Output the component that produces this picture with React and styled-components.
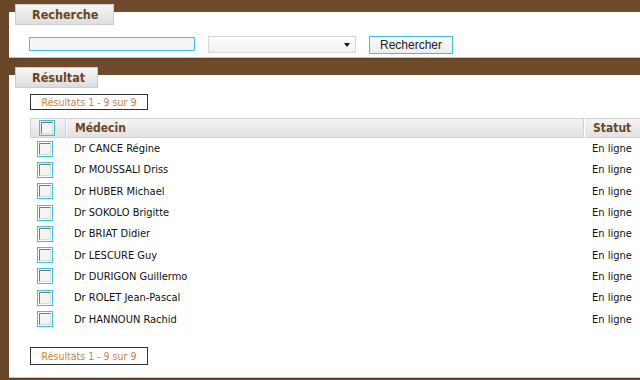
import React from 'react';
import styled, {createGlobalStyle} from 'styled-components';

const Global = createGlobalStyle`
  html, body {
    margin: 0;
    padding: 0;
    overflow: hidden;
  }
  body {
    width: 640px;
    height: 380px;
    background-color: #6f4a2b;
    background-image: linear-gradient(90deg, rgba(0,0,0,0.06), rgba(0,0,0,0) 40px);
    font-family: "DejaVu Sans Condensed", "Noto Sans", sans-serif;
  }
`

const Page = styled.div`
  display: flex;
  flex-direction: column;
  gap: 9px;
  padding-top: 4px;
  padding-left: 9px;
`

const Section = styled.section`
  display: flex;
  flex-direction: column;
`

const Tab = styled.div`
  position: relative;
  z-index: 1;
  align-self: flex-start;
  margin-left: 6px;
  margin-bottom: -13px;
  width: ${p => p.w}px;
  height: 21px;
  box-sizing: border-box;
  padding-left: 16px;
  border: 1px solid #cbcbcb;
  background: linear-gradient(#f7f7f7, #dddddd);
  color: #6b4524;
  font-weight: bold;
  font-size: 12.5px;
  line-height: 20px;
`

const Panel = styled.div`
  background: #fff;
  height: ${p => p.h}px;
  box-sizing: border-box;
  padding: ${p => p.pad};
  border-bottom: 1px solid #cfc7bd;
  box-shadow: 0 1px 1px rgba(0,0,0,0.15);
`

const SearchRow = styled.div`
  display: flex;
  align-items: center;
  gap: 13px;
`

const TextInput = styled.div`
  width: 166px;
  height: 14px;
  box-sizing: border-box;
  border: 1px solid #3ec2d9;
  background: #f5f5f5;
`

const Select = styled.div`
  position: relative;
  width: 148px;
  height: 17px;
  box-sizing: border-box;
  border: 1px solid #d8d8d8;
  background: linear-gradient(#fdfdfd, #f0f0f0);
  margin-top: 2px;
  &::after {
    content: '';
    position: absolute;
    right: 5px;
    top: 6px;
    border-left: 3px solid transparent;
    border-right: 3px solid transparent;
    border-top: 4px solid #111;
  }
`

const Button = styled.div`
  width: 84px;
  height: 18px;
  box-sizing: border-box;
  border: 1px solid #3ec2d9;
  background: linear-gradient(#fbfbfb, #ececec);
  font-family: "Liberation Sans", Arial, sans-serif;
  font-size: 12px;
  line-height: 16px;
  text-align: center;
  color: #222;
  margin-top: 3px;
`

const Count = styled.div`
  width: 118px;
  height: ${p => p.h || 16}px;
  box-sizing: border-box;
  border: 1px solid #333;
  color: #c9824c;
  font-size: 10.5px;
  line-height: ${p => (p.h || 16) - 2}px;
  text-align: center;
`

const Table = styled.div`
  display: grid;
  grid-template-columns: 36px 518px 80px;
  margin-top: 8px;
  margin-bottom: 17px;
`

const Head = styled.div`
  height: 20px;
  box-sizing: border-box;
  border: 1px solid #d2d2d2;
  border-left: ${p => p.first ? '1px solid #d2d2d2' : 'none'};
  margin-left: ${p => p.first ? 0 : 1}px;
  background: linear-gradient(#f4f4f4, #e2e2e2);
  color: #6b4524;
  font-weight: bold;
  font-size: 12px;
  line-height: 18px;
  padding-left: ${p => p.pad}px;
  display: flex;
  align-items: center;
`

const Cell = styled.div`
  height: 21.3px;
  display: flex;
  align-items: center;
  font-size: 11px;
  color: #111;
  padding-left: ${p => p.pad || 0}px;
`

const Check = styled.div`
  width: 16px;
  height: 16px;
  box-sizing: border-box;
  border: 1px solid #3ec2d9;
  padding: 1px;
  margin-left: ${p => p.ml}px;
  span {
    display: block;
    width: 12px;
    height: 12px;
    box-sizing: border-box;
    border-top: 1px solid #7a7a7a;
    border-left: 1px solid #7a7a7a;
    border-right: 1px solid #dcdcdc;
    border-bottom: 1px solid #dcdcdc;
    background: #f4f4f4;
  }
`

const doctors = [
  'Dr CANCE Régine',
  'Dr MOUSSALI Driss',
  'Dr HUBER Michael',
  'Dr SOKOLO Brigitte',
  'Dr BRIAT Didier',
  'Dr LESCURE Guy',
  'Dr DURIGON Guillermo',
  'Dr ROLET Jean-Pascal',
  'Dr HANNOUN Rachid',
]

export default function App() {
  return (
    <Page>
      <Global />
      <Section>
        <Tab w={99}>Recherche</Tab>
        <Panel h={46} pad="21px 0 0 20px">
          <SearchRow>
            <TextInput />
            <Select />
            <Button>Rechercher</Button>
          </SearchRow>
        </Panel>
      </Section>
      <Section>
        <Tab w={83}>Résultat</Tab>
        <Panel h={303} pad="19px 0 0 21px">
          <Count>Résultats 1 - 9 sur 9</Count>
          <Table>
            <Head first><Check ml={8}><span /></Check></Head>
            <Head pad={8}>Médecin</Head>
            <Head pad={8}>Statut</Head>
            {doctors.map(d => (
              <React.Fragment key={d}>
                <Cell><Check ml={7}><span /></Check></Cell>
                <Cell pad={8}>{d}</Cell>
                <Cell pad={8}>En ligne</Cell>
              </React.Fragment>
            ))}
          </Table>
          <Count h={18}>Résultats 1 - 9 sur 9</Count>
        </Panel>
      </Section>
    </Page>
  )
}
